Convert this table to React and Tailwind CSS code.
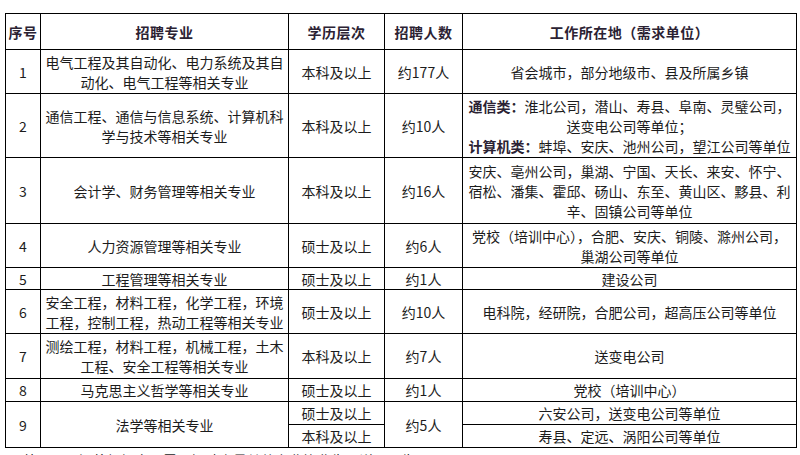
import React from 'react';

const rows = [
  {
    no: '1',
    major: ['电气工程及其自动化、电力系统及其自', '动化、电气工程等相关专业'],
    edu: '本科及以上',
    count: '约177人',
    place: ['省会城市，部分地级市、县及所属乡镇'],
    h: 'h-[44px]',
  },
  {
    no: '2',
    major: ['通信工程、通信与信息系统、计算机科', '学与技术等相关专业'],
    edu: '本科及以上',
    count: '约10人',
    place: null,
    h: 'h-[64px]',
  },
  {
    no: '3',
    major: ['会计学、财务管理等相关专业'],
    edu: '本科及以上',
    count: '约16人',
    place: [
      '安庆、亳州公司，巢湖、宁国、天长、来安、怀宁、',
      '宿松、潘集、霍邱、砀山、东至、黄山区、黟县、利',
      '辛、固镇公司等单位',
    ],
    h: 'h-[66px]',
  },
  {
    no: '4',
    major: ['人力资源管理等相关专业'],
    edu: '硕士及以上',
    count: '约6人',
    place: ['党校（培训中心），合肥、安庆、铜陵、滁州公司，', '巢湖公司等单位'],
    h: 'h-[44px]',
  },
  {
    no: '5',
    major: ['工程管理等相关专业'],
    edu: '硕士及以上',
    count: '约1人',
    place: ['建设公司'],
    h: 'h-[22px]',
  },
  {
    no: '6',
    major: ['安全工程，材料工程，化学工程，环境', '工程，控制工程，热动工程等相关专业'],
    edu: '硕士及以上',
    count: '约10人',
    place: ['电科院，经研院，合肥公司，超高压公司等单位'],
    h: 'h-[44px]',
  },
  {
    no: '7',
    major: ['测绘工程，材料工程，机械工程，土木', '工程、安全工程等相关专业'],
    edu: '本科及以上',
    count: '约7人',
    place: ['送变电公司'],
    h: 'h-[45px]',
  },
  {
    no: '8',
    major: ['马克思主义哲学等相关专业'],
    edu: '硕士及以上',
    count: '约1人',
    place: ['党校（培训中心）'],
    h: 'h-[23px]',
  },
];

const cell = 'border border-black p-0 text-center align-middle whitespace-nowrap';

const Lines = ({ lines }) => (
  <>
    {lines.map((l, i) => (
      <div key={i}>{l}</div>
    ))}
  </>
);

export default function App() {
  return (
    <div
      className="w-[800px] h-[455px] overflow-hidden bg-white pt-[13px] pl-[5px] text-[14px] leading-[20px] text-[#1c1c1c]"
      style={{ fontFamily: '"Noto Sans CJK SC", "Noto Sans", sans-serif' }}
    >
      <table className="border-collapse table-fixed w-[791px]">
        <colgroup>
          <col className="w-[35px]" />
          <col className="w-[248px]" />
          <col className="w-[96px]" />
          <col className="w-[78px]" />
          <col className="w-[334px]" />
        </colgroup>
        <thead>
          <tr className="h-[36px] font-bold text-[#2b2233] tracking-[0.5px]">
            <th className={cell}>序号</th>
            <th className={cell}>招聘专业</th>
            <th className={cell}>学历层次</th>
            <th className={cell}>招聘人数</th>
            <th className={cell}>工作所在地（需求单位）</th>
          </tr>
        </thead>
        <tbody>
          {rows.map((r) => (
            <tr key={r.no} className={r.h}>
              <td className={cell}>{r.no}</td>
              <td className={cell}>
                <Lines lines={r.major} />
              </td>
              <td className={cell}>{r.edu}</td>
              <td className={cell}>{r.count}</td>
              <td className={cell}>
                {r.place ? (
                  <Lines lines={r.place} />
                ) : (
                  <>
                    <div>
                      <span className="font-bold text-[#2b2233]">通信类：</span>淮北公司，潜山、寿县、阜南、灵璧公司，
                    </div>
                    <div>送变电公司等单位；</div>
                    <div>
                      <span className="font-bold text-[#2b2233]">计算机类：</span>蚌埠、安庆、池州公司，望江公司等单位
                    </div>
                  </>
                )}
              </td>
            </tr>
          ))}
          <tr className="h-[23px]">
            <td className={cell} rowSpan={2}>9</td>
            <td className={cell} rowSpan={2}>法学等相关专业</td>
            <td className={cell}>硕士及以上</td>
            <td className={cell} rowSpan={2}>约5人</td>
            <td className={cell}>六安公司，送变电公司等单位</td>
          </tr>
          <tr className="h-[23px]">
            <td className={cell}>本科及以上</td>
            <td className={cell}>寿县、定远、涡阳公司等单位</td>
          </tr>
        </tbody>
      </table>
      <p className="mt-[2px] pl-[4px] whitespace-nowrap">另外，公司还将根据实际需要招聘少量其他专业毕业生，详见公告。</p>
    </div>
  );
}
